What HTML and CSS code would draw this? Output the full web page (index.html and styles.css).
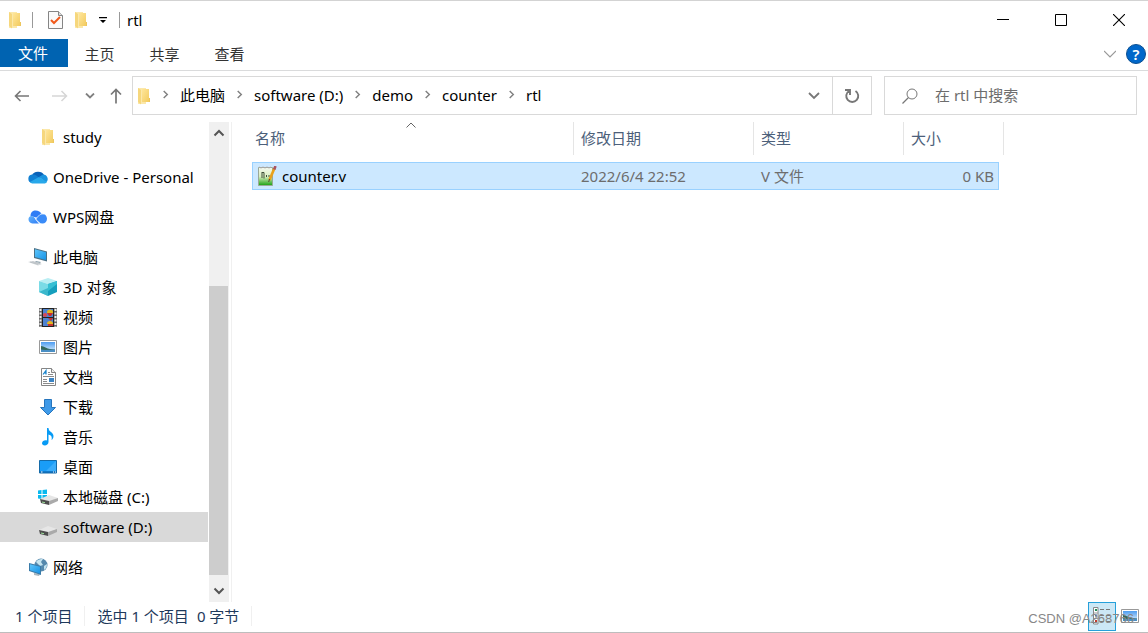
FILE: index.html
```html
<!DOCTYPE html>
<html lang="zh-CN">
<head>
<meta charset="utf-8">
<title>rtl</title>
<link rel="stylesheet" href="styles.css">
</head>
<body>
<svg class="defs" width="0" height="0" aria-hidden="true">
  <defs>
    <linearGradient id="fold" x1="0" y1="0" x2="1" y2="1"><stop offset="0" stop-color="#ffe69a"/><stop offset="1" stop-color="#f2cb60"/></linearGradient>
    <linearGradient id="sky" x1="0" y1="0" x2="0" y2="1"><stop offset="0" stop-color="#4d9cf0"/><stop offset="1" stop-color="#e4f4fd"/></linearGradient>
    <linearGradient id="screen" x1="0" y1="0" x2="1" y2="1"><stop offset="0" stop-color="#5cc4fa"/><stop offset="1" stop-color="#1793e6"/></linearGradient>
    <linearGradient id="leaf" x1="0" y1="0" x2="0" y2="1"><stop offset="0" stop-color="#f5f8f0"/><stop offset=".5" stop-color="#d9efbf"/><stop offset="1" stop-color="#18a010"/></linearGradient>
    <linearGradient id="wps" x1="0" y1="0" x2="1" y2="1"><stop offset="0" stop-color="#62b4fc"/><stop offset="1" stop-color="#2f7cf5"/></linearGradient>
    <symbol id="folder" viewBox="0 0 14 18">
      <path d="M1 1h8v16H1z" fill="#fbe8ab"/><path d="M5 2h7v13H5z" fill="url(#fold)"/><path d="M12 11h1v4h-1z" fill="#edc65d"/><path d="M1 1l3 2v14.500L1 15z" fill="#f6d77d"/>
    </symbol>
    <symbol id="picture" viewBox="0 0 18 14">
      <path d="M.5.5h17v13H.5z" fill="#fff" stroke="#999"/><path d="M2 2h14v10H2z" fill="url(#sky)"/><path d="M2 6c3 0 6 3 9 3l5 .5V10H2z" fill="#34685d"/><path d="M2 9.500c4 1 9 0 14 0V12H2z" fill="#4a8fc4"/>
    </symbol>
    <symbol id="disk" viewBox="0 0 18 10">
      <path d="M0 4L9 0l9 3-9 4z" fill="#e6e6e6"/><path d="M0 4l9 2v4L1 8z" fill="#4d4d4d"/><path d="M9 6l9-3v3l-9 4z" fill="#aaa"/><path d="M2 7l3 .7" stroke="#9de29b"/>
    </symbol>
    <symbol id="chevron" viewBox="0 0 6 10"><path d="M1 1l4 4-4 4" fill="none" stroke="#808080" stroke-width="1.600"/></symbol>
  </defs>
</svg>
<main class="window">
  <header class="titlebar">
    <svg class="folder" aria-hidden="true"><use href="#folder"/></svg>
    <span class="rule"></span>
    <button class="quick" aria-label="属性"><svg width="15" height="18" viewBox="0 0 15 18"><path d="M.5.5h10l4 4v13H.5z" fill="#fafafa" stroke="#858585"/><path d="M10.500.5v4h4" fill="#ddd" stroke="#858585"/><path d="M3 9l3 3 6-6" fill="none" stroke="#f0591b" stroke-width="2"/></svg></button>
    <button class="quick" aria-label="新建文件夹"><svg class="folder"><use href="#folder"/></svg></button>
    <button class="quick more" aria-label="自定义快速访问工具栏"><svg width="8" height="7" viewBox="0 0 8 7"><path d="M0 0h8v1.200H0zM1 3h6L4 6z"/></svg></button>
    <span class="rule"></span>
    <span class="title">rtl</span>
    <div class="controls">
      <button aria-label="最小化"><svg width="12" height="12" viewBox="0 0 12 12"><path d="M0 5.500h12" stroke="#000"/></svg></button>
      <button aria-label="最大化"><svg width="12" height="12" viewBox="0 0 12 12"><path d="M.5.5h11v11H.5z" fill="none" stroke="#000"/></svg></button>
      <button aria-label="关闭"><svg width="12" height="12" viewBox="0 0 12 12"><path d="M0 0l12 12M12 0L0 12" stroke="#000" stroke-width="1.100"/></svg></button>
    </div>
  </header>
  <nav class="ribbon" aria-label="功能区">
    <button class="tab file">文件</button>
    <button class="tab">主页</button>
    <button class="tab">共享</button>
    <button class="tab">查看</button>
    <button class="expand" aria-label="展开功能区"><svg width="12" height="8" viewBox="0 0 12 8"><path d="M0 1l6 6 6-6" fill="none" stroke="#999" stroke-width="1.200"/></svg></button>
    <button class="help" aria-label="帮助">?</button>
  </nav>
  <div class="location">
    <div class="history">
      <button aria-label="后退"><svg width="16" height="12" viewBox="0 0 16 12"><path d="M15 6H1.500M6.500 1l-5 5 5 5" fill="none" stroke="#777" stroke-width="1.600"/></svg></button>
      <button aria-label="前进"><svg width="16" height="12" viewBox="0 0 16 12"><path d="M0 6h14M9.500 1l5 5-5 5" fill="none" stroke="#d6d6d6" stroke-width="1.500"/></svg></button>
      <button class="recent" aria-label="最近浏览的位置"><svg width="10" height="6" viewBox="0 0 10 6"><path d="M1 .5l4 4 4-4" fill="none" stroke="#808080" stroke-width="1.800"/></svg></button>
      <button class="up" aria-label="上移"><svg width="12" height="16" viewBox="0 0 12 16"><path d="M6 15.500V1.500M1 6.500l5-5 5 5" fill="none" stroke="#777" stroke-width="1.700"/></svg></button>
    </div>
    <div class="address">
      <svg class="folder" aria-hidden="true"><use href="#folder"/></svg>
      <div class="crumbs">
        <svg class="sep"><use href="#chevron"/></svg><a href="#pc">此电脑</a>
        <svg class="sep"><use href="#chevron"/></svg><a href="#d">software (D:)</a>
        <svg class="sep"><use href="#chevron"/></svg><a href="#demo">demo</a>
        <svg class="sep"><use href="#chevron"/></svg><a href="#counter">counter</a>
        <svg class="sep"><use href="#chevron"/></svg><a href="#rtl">rtl</a>
      </div>
      <button class="drop" aria-label="以前的位置"><svg width="12" height="8" viewBox="0 0 12 8"><path d="M1 1l5 5 5-5" fill="none" stroke="#777" stroke-width="1.800"/></svg></button>
      <button class="refresh" aria-label="刷新"><svg width="16" height="16" viewBox="0 0 16 16"><path d="M11.500 3A6 6 0 1 1 5 3M1 2h5v5" fill="none" stroke="#777" stroke-width="1.900"/></svg></button>
    </div>
    <label class="search"><svg width="16" height="16" viewBox="0 0 16 16" aria-hidden="true"><circle cx="10" cy="6" r="5" fill="none" stroke="#777"/><path d="M6.500 9.500L.5 15.500" stroke="#777" stroke-width="1.200"/></svg><input type="text" placeholder="在 rtl 中搜索" aria-label="在 rtl 中搜索"></label>
  </div>
  <div class="body">
    <nav class="tree" aria-label="导航窗格">
      <a class="child" href="#study"><span class="ico"><svg class="folder"><use href="#folder"/></svg></span>study</a>
      <a class="root" href="#onedrive"><span class="ico"><svg width="20" height="14" viewBox="0 0 20 14"><path d="M4 5.500a6.500 5.500 0 0 1 12-.5l-5 4z" fill="#0a62b8"/><path d="M4 13A4.300 4.300 0 0 1 4 4.500c3-.5 5 1 7 3L4 13z" fill="#1180d3"/><path d="M11 7l4-2.500a4.500 4.500 0 0 1 3 8z" fill="#1b94df"/><path d="M2 12l9-5 8 5c-1 1.500-2 1.500-3 1.500H5c-1 0-2 0-3-1.500z" fill="#28a8ea"/></svg></span>OneDrive - Personal</a>
      <a class="root" href="#wps"><span class="ico"><svg width="20" height="14" viewBox="0 0 20 14"><path d="M2.500 6C2.500 2 5 .5 7.500.5c3 0 5 1.500 6 3.500L10 8z" fill="#2f7cf5"/><path d="M3 6c4 0 4 4 8 7.500H4.500C0 13.500-1 7 3 6z" fill="url(#wps)"/><path d="M8 9l4-4.200c4-2.300 7 .7 7 4 0 3-2 4.700-4.500 4.700-3 0-4.500-2-6.500-4.500z" fill="#3a8bf8"/><path d="M7.500 9L12 4.500c2-1 3-.5 3.500 0" fill="none" stroke="#d7eaff" stroke-width=".9"/><path d="M7.500 9c2 2.500 3 3.500 5 4.500" fill="none" stroke="#d7eaff" stroke-width=".9"/></svg></span>WPS网盘</a>
      <a class="root" href="#pc"><span class="ico"><svg width="20" height="18" viewBox="0 0 20 18"><path d="M6 0l13 3.500v10L6 10z" fill="#4b7085"/><path d="M7 1.300l11 3v7.700L7 9z" fill="url(#screen)"/><path d="M8 13l5 1-1 1-5-1z" fill="#8fa3ae"/><path d="M0 14l4-1 10 3-4 1.500z" fill="#d5d9dc"/><path d="M2 14l8 2.300M4.500 13.500l8 2.200" stroke="#9ea7ad" stroke-width=".5"/></svg></span>此电脑</a>
      <a class="child" href="#3d"><span class="ico"><svg width="18" height="18" viewBox="0 0 18 18"><path d="M0 3l9-3 9 3-9 3z" fill="#b9eef3"/><path d="M0 3l9 3v12l-9-4z" fill="#7adbe6"/><path d="M18 3L9 6v12l9-4z" fill="#159fbd"/><path d="M0 14l9-4v8z" fill="#3bb8cc"/><path d="M9 6l9-3v3L9 13z" fill="#35bfd3"/></svg></span>3D 对象</a>
      <a class="child" href="#video"><span class="ico"><svg width="18" height="19" viewBox="0 0 18 19"><path d="M0 0h18v19H0z" fill="#6a6a6a"/><path d="M3 0h12v19H3z" fill="#222"/><path d="M4 1h10v8H4zM4 10h10v8H4z" fill="#4e82cf"/><path d="M1.500 1v18M16.500 1v18" stroke="#eee" stroke-width="2" stroke-dasharray="2 1.500"/><ellipse cx="11" cy="4" rx="3" ry="2.500" fill="#dfb51d"/><path d="M8 5h6l-2 3h-2z" fill="#ca2b30"/><circle cx="6" cy="7" r="2" fill="#db4851"/><path d="M8 16a3 3 0 0 1 6 0z" fill="#e8b51d"/><path d="M9 10h5l-2 3zM9 16h5v2H9z" fill="#c73430"/></svg></span>视频</a>
      <a class="child" href="#pictures"><span class="ico"><svg width="18" height="14"><use href="#picture"/></svg></span>图片</a>
      <a class="child" href="#docs"><span class="ico"><svg width="15" height="18" viewBox="0 0 15 18"><path d="M.5.5h10l4 4v13H.5z" fill="#fff" stroke="#858585"/><path d="M10.500.5v4h4" fill="#eee" stroke="#858585"/><path d="M7 4.500h2M7 6.500h5M2 8.500h11M2 11.500h4M2 13.500h4M2 15.500h11" stroke="#8b8b8b"/><path d="M2 6.500l3-4v4M3 5h2" fill="none" stroke="#1682cb" stroke-width="1.200"/><path d="M8 10h5v4H8z" fill="#3c84c4"/></svg></span>文档</a>
      <a class="child" href="#downloads"><span class="ico"><svg width="16" height="17" viewBox="0 0 16 17"><path d="M4.500.5h7v8h4L8 16 .5 8.500h4z" fill="#3f9ae8" stroke="#2675bd"/></svg></span>下载</a>
      <a class="child" href="#music"><span class="ico"><svg width="12" height="18" viewBox="0 0 12 18"><path d="M5 0h1.500c0 4 5 4 5 8 0 2-1 3.500-2 4 1-4-1-5-3-5.500V14c0 4-6 4.500-6.500 1.500C0 12.500 3 12 5 12.500z" fill="#079bf5"/></svg></span>音乐</a>
      <a class="child" href="#desktop"><span class="ico"><svg width="18" height="14" viewBox="0 0 18 14"><path d="M.5.5h17v12.500H.5z" fill="#1a9df7" stroke="#156ba9"/><path d="M17 1v10H7z" fill="#3badfb"/><path d="M1 12h16" stroke="#0b579b"/><path d="M2 12h1.500M14 12h1M16 12h1" stroke="#fff"/></svg></span>桌面</a>
      <a class="child" href="#c"><span class="ico"><svg width="20" height="16" viewBox="0 0 20 16"><path d="M0 1.500l3.500-.5v4H0zM4.500 1L9 .5V5H4.500zM0 6h3.500v4L0 9.500zM4.500 6H9v4.500L4.500 10z" fill="#09b9ef"/><svg x="2" y="6" width="18" height="10"><use href="#disk"/></svg></svg></span>本地磁盘 (C:)</a>
      <a class="child current" href="#d" aria-current="true"><span class="ico low"><svg width="18" height="10"><use href="#disk"/></svg></span>software (D:)</a>
      <a class="root" href="#network"><span class="ico"><svg width="19" height="19" viewBox="0 0 19 19"><circle cx="12" cy="7" r="6.500" fill="#5689ad"/><path d="M7 4c2-3 5-3 7-3l-2 3 2 3-3 1-2-2zM15 8l3-2c0 3-1 5-3 6z" fill="#c5e4ef"/><path d="M5 15l6 1-1 2-5-1z" fill="#a9b6be"/><path d="M0 5l12 3v9L0 13z" fill="#397ba9"/><path d="M1 6.300l10 2.500v6.700L1 12.200z" fill="url(#screen)"/></svg></span>网络</a>
    </nav>
    <div class="scroll">
      <button aria-label="向上滚动"><svg width="12" height="8" viewBox="0 0 12 8"><path d="M1.500 6.500L6 2l4.500 4.500" fill="none" stroke="#555" stroke-width="2"/></svg></button>
      <div class="track"><div class="thumb"></div></div>
      <button aria-label="向下滚动"><svg width="12" height="8" viewBox="0 0 12 8"><path d="M1.500 1.500L6 6l4.500-4.500" fill="none" stroke="#555" stroke-width="2"/></svg></button>
    </div>
    <section class="files">
      <table>
        <colgroup><col class="c-name"><col class="c-date"><col class="c-type"><col class="c-size"><col class="c-end"></colgroup>
        <thead>
          <tr><th scope="col" class="name">名称<svg class="sort" width="10" height="6" viewBox="0 0 10 6" aria-label="升序"><path d="M.5 5.500L5 1l4.500 4.500" fill="none" stroke="#666"/></svg></th><th scope="col">修改日期</th><th scope="col">类型</th><th scope="col">大小</th><td class="end"></td></tr>
        </thead>
        <tbody>
          <tr><td class="name"><div class="entry"><svg width="20" height="20" viewBox="0 0 20 20" aria-hidden="true"><path d="M1.500 1.500h14v18h-14z" fill="url(#leaf)" stroke="#9aa898"/><path d="M2 1l2 1 2-1 2 1 2-1 2 1 2-1" fill="none" stroke="#aaa"/><path d="M5 6v6M5 6.500h2v6M9.500 9v2M12 9v2" fill="none" stroke="#3c4d36"/><path d="M17.500 2l-5 12" stroke="#e9a11b" stroke-width="2.600"/><path d="M18.500 0l-1.300 3.500" stroke="#a65365" stroke-width="2.600"/><path d="M12.500 13l-.8 3" stroke="#5b4429"/></svg>counter.v</div></td><td>2022/6/4 22:52</td><td>V 文件</td><td class="size">0 KB</td><td class="end"></td></tr>
        </tbody>
      </table>
    </section>
  </div>
  <footer class="status">
    <span class="count">1 个项目</span>
    <span class="picked"><span>选中 1 个项目</span><span>0 字节</span></span>
    <div class="views">
      <button class="on" aria-label="详细信息"><svg width="18" height="18" viewBox="0 0 18 18"><path d="M.5.5h4.500v16.500H.5z" fill="#fff" stroke="#888"/><path d="M1 6h4M1 11.500h4" stroke="#999"/><path d="M2 3h2" stroke="#238c58" stroke-width="2"/><path d="M2 8.500h2" stroke="#357bc0" stroke-width="2"/><path d="M2 14h2" stroke="#c33b2d" stroke-width="2"/><path d="M7 2.500h4M13 2.500h4M7 8.500h4M13 8.500h4M7 14.500h4M13 14.500h4" stroke="#777"/></svg></button>
      <button aria-label="大缩略图"><svg width="18" height="14"><use href="#picture"/></svg></button>
      <span class="mark">CSDN @A268766</span>
    </div>
  </footer>
</main>
</body>
</html>
```

FILE: styles.css
```css
* { box-sizing: border-box; }
body {
  margin: 0;
  background: #fff;
  color: #000;
  font: 15px/20px "Noto Sans", "Noto Sans CJK SC", sans-serif;
}
button, input { font: inherit; color: inherit; border: 0; background: none; padding: 0; margin: 0; }
button { display: flex; align-items: center; justify-content: center; }
a { color: inherit; text-decoration: none; }
svg { display: block; flex: none; }
.defs { position: absolute; }
.folder { width: 14px; height: 18px; }

.window {
  display: flex;
  flex-direction: column;
  min-height: 100vh;
  border-top: 1px solid #d3d3d3;
  border-bottom: 1px solid #bdbdbd;
}

.titlebar { display: flex; align-items: center; height: 38px; padding-left: 8px; }
.rule { width: 1px; height: 16px; background: #999; margin: 0 10px; }
.quick { width: 25px; height: 26px; }
.more { width: 20px; }
.more + .rule { margin: 0 7px 0 6px; }
.controls { display: flex; margin-left: auto; }
.controls button { width: 58px; height: 38px; }

.ribbon { display: flex; height: 32px; border-bottom: 1px solid #dadbdc; color: #333; }
.tab { width: 65px; height: 30px; padding-right: 2px; }
.file { width: 68px; height: 28px; background: #0063b1; color: #fff; }
.expand { width: 20px; height: 30px; margin-left: auto; }
.help {
  width: 20px; height: 20px; margin: 5px 2px 0 6px;
  border: 1px solid #0b4f91; border-radius: 50%;
  background: #0067ca; color: #fff; font-weight: 600;
}

.location { display: flex; padding: 5px 11px 7px 0; height: 51px; }
.history { display: flex; flex: none; width: 132px; padding-left: 3px; }
.history button { width: 38px; }
.history .recent { width: 22px; }
.history .up { width: 29px; }
.address { display: flex; align-items: center; flex: 1; min-width: 0; border: 1px solid #d9d9d9; padding-left: 4px; }
.crumbs { display: flex; align-items: center; flex: 1; padding-bottom: 2px; white-space: nowrap; }
.sep { width: 29px; height: 9px; }
.drop { width: 36px; height: 37px; }
.refresh { width: 39px; height: 37px; border-left: 1px solid #d9d9d9; }
.search { display: flex; align-items: center; gap: 17px; width: 253px; margin-left: 12px; padding-left: 17px; border: 1px solid #d9d9d9; }
.search input { flex: 1; min-width: 0; padding-bottom: 2px; outline: 0; }
.search input::placeholder { color: #6d6d6d; opacity: 1; }

.body { display: flex; flex: 1; min-height: 480px; }
.tree { width: 208px; flex: none; }
.tree a { display: flex; align-items: center; gap: 5px; height: 30px; padding-left: 28px; white-space: nowrap; }
.tree .child { padding-left: 38px; }
.tree .root { margin-top: 10px; }
.tree .current { background: #d9d9d9; }
.ico { display: flex; justify-content: center; width: 20px; flex: none; }
.low { padding-top: 8px; }
.scroll { display: flex; flex-direction: column; width: 20px; margin-left: 1px; background: #f0f0f0; flex: none; }
.scroll button { width: 19px; height: 22px; }
.track { display: flex; flex-direction: column; justify-content: flex-end; flex: 1; padding-bottom: 5px; }
.thumb { width: 19px; height: 67%; background: #cdcdcd; }
.files { flex: 1; margin-left: 2px; padding-left: 20px; border-left: 1px solid #f0f0f0; }

table { table-layout: fixed; width: 752px; border-collapse: separate; border-spacing: 0; }
.c-name { width: 321px; }
.c-date { width: 180px; }
.c-type { width: 150px; }
.c-size { width: 96px; }
.c-end { width: 5px; }
th, td { padding: 0 0 0 7px; text-align: left; white-space: nowrap; }
th { height: 33px; padding-bottom: 2px; border-left: 1px solid #e5e5e5; color: #4c607a; font-weight: 400; }
th.name { position: relative; border-left: 0; padding-left: 3px; }
thead .end { border-right: 1px solid #e5e5e5; padding: 0; }
.sort { position: absolute; top: 0; left: 50%; margin-left: -7px; }
thead::after { content: ""; display: block; height: 7px; }
tbody td { height: 28px; background: #cce8ff; border: 1px solid #99d1ff; border-width: 1px 0; padding-left: 8px; color: #6d6d6d; }
tbody .name { border-left-width: 1px; padding-left: 4px; color: #000; }
tbody .size { border-right-width: 1px; padding-right: 4px; text-align: right; }
tbody .end { background: none; border: 0; padding: 0; }
.entry { display: flex; align-items: center; gap: 5px; }

.status { display: flex; align-items: center; height: 30px; padding: 0 0 2px 15px; color: #1e395b; }
.count, .picked { border-right: 1px solid #f0f0f0; padding-right: 12px; }
.picked { display: flex; gap: 8px; padding-left: 12px; }
.views { position: relative; display: flex; margin-left: auto; padding-right: 4px; }
.views button { width: 28px; height: 29px; }
.views .on { background: #cce8f6; border: 1px solid #26a0da; }
.mark { position: absolute; right: 14px; top: 8px; color: #888; font: 13px/18px "Liberation Sans", sans-serif; white-space: nowrap; }
```
